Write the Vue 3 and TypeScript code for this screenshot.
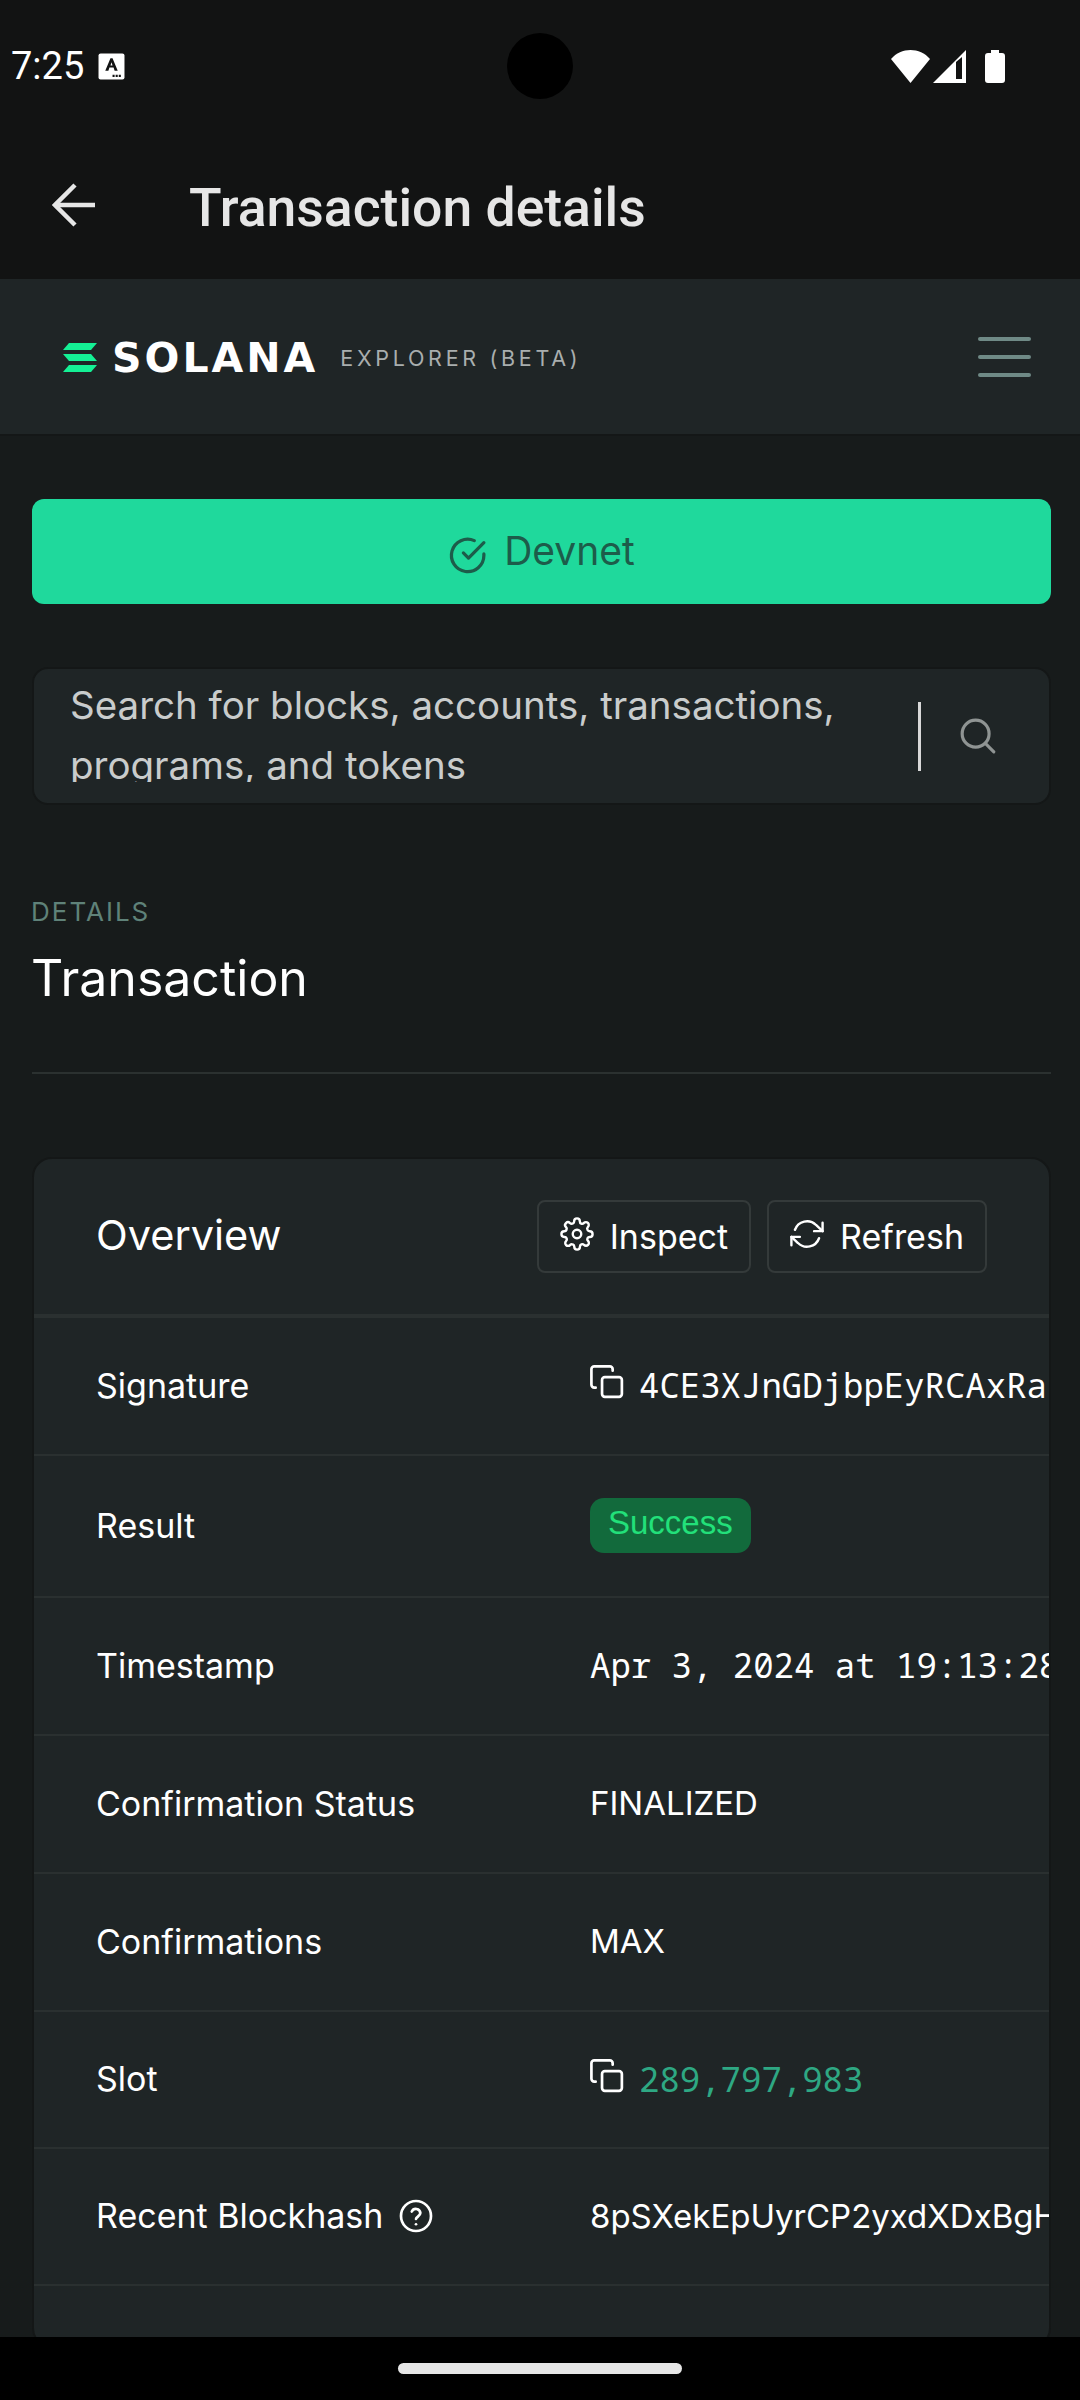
<template>
  <div class="screen">
    <div class="status">
      <span class="time">7:25</span>
      <svg class="a-icon" width="27" height="27" viewBox="0 0 26 26">
        <rect x="0.5" y="0.5" width="25" height="25" rx="2" fill="#fff" />
        <path d="M7 17 L12 5 h2 L19 17 h-3 l-1-3 h-4 l-1 3z M12 12 h2 l-1-3z" fill="#121313" fill-rule="evenodd" />
        <path d="M14 21h2v2h-2zM17 21h2v2h-2zM20 21h2v2h-2z" fill="#121313" />
      </svg>
      <div class="camera"></div>
      <div class="status-right">
        <svg width="39" height="33" viewBox="0 0 39 33"><path d="M0 9 C10 -3 29 -3 39 9 L19.5 33z" fill="#fff" /></svg>
        <svg class="signal" width="33" height="33" viewBox="0 0 33 33">
          <path d="M33 0 V33 H0z" fill="#fff" />
          <path d="M23 12 L29 7 V29 H23z" fill="#121313" />
        </svg>
        <svg class="battery" width="20" height="33" viewBox="0 0 20 33">
          <path d="M6 0 h8 v3 h3 a3 3 0 0 1 3 3 v24 a3 3 0 0 1 -3 3 h-14 a3 3 0 0 1 -3 -3 v-24 a3 3 0 0 1 3 -3 h3z" fill="#fff" />
        </svg>
      </div>
    </div>

    <div class="appbar">
      <svg class="back" width="44" height="44" viewBox="0 0 44 44" fill="none" stroke="#e6e6e6" stroke-width="4.5">
        <path d="M43 22 H4" />
        <path d="M23 2 L3 22 L23 42" />
      </svg>
      <span class="appbar-title">Transaction details</span>
    </div>

    <div class="web">
      <header class="nav">
        <svg class="logo-mark" width="34" height="29" viewBox="0 0 34 29">
          <path d="M6 0 H34 L28 7 H0z" fill="#14f195" />
          <path d="M0 11 H28 L34 18 H6z" fill="#14f195" />
          <path d="M6 22 H34 L28 29 H0z" fill="#14f195" />
        </svg>
        <span class="wordmark">SOLANA</span>
        <span class="beta">EXPLORER (BETA)</span>
        <div class="burger"><i></i><i></i><i></i></div>
      </header>

      <main class="main">
        <div class="cluster">
          <svg width="41" height="41" viewBox="0 0 24 24" fill="none" stroke="#1d5c4a" stroke-width="1.9" stroke-linecap="round" stroke-linejoin="round">
            <path d="M21 11.1V12a9.5 9.5 0 1 1-5.6-8.7" />
            <path d="M21 4.5 12 13.5l-3-3" />
          </svg>
          <span>Devnet</span>
        </div>

        <div class="search">
          <div class="search-text">Search for blocks, accounts, transactions, programs, and tokens</div>
          <div class="search-sep"></div>
          <svg class="search-icon" width="38" height="38" viewBox="0 0 24 24" fill="none" stroke="#8f9493" stroke-width="2" stroke-linecap="round">
            <circle cx="10.5" cy="10.5" r="8.5" />
            <path d="M22 22 16.8 16.8" />
          </svg>
        </div>

        <div class="page-head">
          <div class="pretitle">DETAILS</div>
          <h1>Transaction</h1>
        </div>

        <section class="card">
          <div class="card-head">
            <h2>Overview</h2>
            <button class="btn">
              <svg width="34" height="34" viewBox="0 0 24 24" fill="none" stroke="#fff" stroke-width="1.7" stroke-linecap="round" stroke-linejoin="round">
                <circle cx="12" cy="12" r="3" />
                <path d="M19.4 15a1.65 1.65 0 0 0 .33 1.82l.06.06a2 2 0 1 1-2.83 2.83l-.06-.06a1.65 1.65 0 0 0-2.82 1.17V21a2 2 0 1 1-4 0v-.09A1.65 1.65 0 0 0 9 19.4a1.65 1.65 0 0 0-1.82.33l-.06.06a2 2 0 1 1-2.83-2.83l.06-.06a1.65 1.65 0 0 0-1.17-2.82H3a2 2 0 1 1 0-4h.09A1.65 1.65 0 0 0 4.6 9a1.65 1.65 0 0 0-.33-1.82l-.06-.06a2 2 0 1 1 2.83-2.83l.06.06A1.65 1.65 0 0 0 9 4.6h.09A1.65 1.65 0 0 0 10 3.09V3a2 2 0 1 1 4 0v.09a1.65 1.65 0 0 0 2.82 1.17l.06-.06a2 2 0 1 1 2.83 2.83l-.06.06A1.65 1.65 0 0 0 19.4 9v.09a1.65 1.65 0 0 0 1.51 1H21a2 2 0 1 1 0 4h-.09a1.65 1.65 0 0 0-1.51 1z" />
              </svg>
              Inspect
            </button>
            <button class="btn">
              <svg width="34" height="34" viewBox="0 0 24 24" fill="none" stroke="#fff" stroke-width="1.7" stroke-linecap="round" stroke-linejoin="round">
                <path d="M23 4v6h-6" />
                <path d="M1 20v-6h6" />
                <path d="M3.51 9a9 9 0 0 1 14.85-3.36L23 10M1 14l4.64 4.36A9 9 0 0 0 20.49 15" />
              </svg>
              Refresh
            </button>
          </div>

          <div v-for="row in rows" :key="row.label" class="row" :style="{ height: row.height + 'px' }">
            <div class="row-label">
              {{ row.label }}
              <svg v-if="row.help" class="help" width="36" height="36" viewBox="0 0 24 24" fill="none" stroke="#fff" stroke-width="1.8" stroke-linecap="round">
                <circle cx="12" cy="12" r="10" />
                <path d="M9.2 9a3 3 0 0 1 5.7 1c0 2-2.9 2.6-2.9 4" />
                <path d="M12 17.5h.01" />
              </svg>
            </div>
            <div class="row-value" :class="row.kind">
              <svg v-if="row.copy" class="copy" width="34" height="34" viewBox="0 0 24 24" fill="none" stroke="#fff" stroke-width="1.9" stroke-linecap="round" stroke-linejoin="round">
                <rect x="8.5" y="8.5" width="14" height="14" rx="2" />
                <path d="M4 16H3a2 2 0 0 1-2-2V3a2 2 0 0 1 2-2h11a2 2 0 0 1 2 2v1" />
              </svg>
              <span v-if="row.kind === 'badge'" class="success">{{ row.value }}</span>
              <span v-else>{{ row.value }}</span>
            </div>
          </div>
          <div class="row row-empty"></div>
        </section>
      </main>
    </div>

    <div class="navbar"><div class="handle"></div></div>
  </div>
</template>

<script setup lang="ts">
interface Row {
  label: string
  value: string
  height: number
  kind?: string
  copy?: boolean
  help?: boolean
}

const rows: Row[] = [
  { label: 'Signature', value: '4CE3XJnGDjbpEyRCAxRa', height: 138, kind: 'mono', copy: true },
  { label: 'Result', value: 'Success', height: 142, kind: 'badge' },
  { label: 'Timestamp', value: 'Apr 3, 2024 at 19:13:28', height: 138, kind: 'mono' },
  { label: 'Confirmation Status', value: 'FINALIZED', height: 138 },
  { label: 'Confirmations', value: 'MAX', height: 138 },
  { label: 'Slot', value: '289,797,983', height: 137, kind: 'mono link', copy: true },
  { label: 'Recent Blockhash', value: '8pSXekEpUyrCP2yxdXDxBgH', height: 137, help: true },
]
</script>

<style>
html,
body {
  margin: 0;
  background: #000;
}
</style>

<style scoped>
.screen {
  position: relative;
  width: 1080px;
  height: 2400px;
  display: flex;
  flex-direction: column;
  overflow: hidden;
  background: #171b1b;
  font-family: Inter, "Noto Sans", sans-serif;
  color: #fff;
}

.status {
  height: 130px;
  flex: none;
  display: flex;
  align-items: center;
  padding: 2px 75px 0 11px;
  box-sizing: border-box;
  background: #121313;
  font-family: Roboto, sans-serif;
}

.time {
  font-size: 38px;
  color: #fff;
}

.a-icon {
  margin-left: 14px;
}

.camera {
  position: absolute;
  left: 507px;
  top: 33px;
  width: 66px;
  height: 66px;
  border-radius: 50%;
  background: #000;
}

.status-right {
  margin-left: auto;
  display: flex;
  align-items: center;
}

.signal {
  margin-left: 3px;
}

.battery {
  margin-left: 19px;
}

.appbar {
  height: 149px;
  flex: none;
  display: flex;
  align-items: center;
  background: #121313;
}

.back {
  margin-left: 52px;
}

.appbar-title {
  margin-left: 93px;
  margin-top: 5px;
  font-family: Roboto, sans-serif;
  font-weight: 500;
  font-size: 53.5px;
  color: #e6e6e6;
}

.web {
  flex: 1;
  min-height: 0;
  overflow: hidden;
}

.nav {
  height: 157px;
  box-sizing: border-box;
  display: flex;
  align-items: center;
  padding: 0 20px 0 63px;
  background: #1f2526;
  border-bottom: 2px solid #141717;
}

.logo-mark {
  margin-top: 2px;
}

.wordmark {
  margin-left: 15px;
  margin-top: 3px;
  font-family: "DejaVu Sans", sans-serif;
  font-weight: 700;
  font-size: 41px;
  line-height: 1;
  letter-spacing: 3px;
  color: #fff;
}

.beta {
  margin-left: 22px;
  margin-top: 2px;
  font-size: 21.5px;
  letter-spacing: 3.7px;
  color: #a9aeae;
}

.burger {
  margin-left: auto;
  width: 53px;
  display: flex;
  flex-direction: column;
  gap: 14px;
  margin-right: 29px;
}

.burger i {
  display: block;
  height: 4px;
  border-radius: 2px;
  background: #6f8a86;
}

.main {
  padding: 63px 29px 0 32px;
}

.cluster {
  height: 105px;
  display: flex;
  align-items: center;
  justify-content: center;
  gap: 15px;
  border-radius: 12px;
  background: #1fd99c;
  color: #1d5c4a;
  font-size: 39px;
}

.cluster svg {
  margin-top: 7px;
}

.cluster span {
  margin-top: -2px;
}

.search {
  margin-top: 63px;
  height: 138px;
  box-sizing: border-box;
  display: flex;
  align-items: center;
  padding: 0 52px 0 36px;
  border: 2px solid #141717;
  border-radius: 16px;
  background: #1f2526;
}

.search-text {
  width: 844px;
  height: 107px;
  align-self: flex-start;
  margin-top: 6px;
  overflow: hidden;
  font-size: 38.5px;
  line-height: 60px;
  color: #c9cccc;
}

.search-sep {
  margin-left: 4px;
  width: 3px;
  height: 69px;
  background: #d8d8d8;
}

.search-icon {
  margin-left: auto;
}

.page-head {
  margin-top: 91px;
  padding-bottom: 60px;
  border-bottom: 2px solid #2b3130;
}

.pretitle {
  margin-left: -1px;
  font-size: 26px;
  line-height: 32px;
  letter-spacing: 2px;
  color: #5f8279;
}

h1 {
  margin: 16px 0 0 -1px;
  font-size: 50px;
  font-weight: 400;
  line-height: 68px;
  color: #fff;
}

.card {
  margin-top: 83px;
  border: 2px solid #141717;
  border-radius: 20px;
  background: #1f2526;
  overflow: hidden;
}

.card-head {
  height: 159px;
  box-sizing: border-box;
  display: flex;
  align-items: center;
  padding: 0 62px 0 62px;
  border-bottom: 4px solid #2a3030;
}

h2 {
  margin: -3px auto 0 0;
  font-size: 41.5px;
  font-weight: 400;
}

.btn {
  height: 73px;
  display: flex;
  align-items: center;
  gap: 16px;
  margin-left: 16px;
  padding: 0 21px;
  box-sizing: border-box;
  border: 2px solid #343a3a;
  border-radius: 8px;
  background: transparent;
  color: #fff;
  font-family: inherit;
  font-size: 34px;
}

.btn svg {
  margin-top: -6px;
}

.row {
  box-sizing: border-box;
  display: flex;
  align-items: center;
  padding-left: 62px;
  border-bottom: 2px solid #2a3030;
  font-size: 34px;
}

.row-empty {
  height: 60px;
  border-bottom: none;
}

.row-label {
  width: 494px;
  flex: none;
  display: flex;
  align-items: center;
  gap: 15px;
  margin-top: -2px;
}

.row-value {
  display: flex;
  align-items: center;
  gap: 15px;
  margin-top: -2px;
  white-space: nowrap;
  font-size: 33px;
}

.mono {
  font-family: "Noto Sans Mono", "DejaVu Sans Mono", monospace;
  font-size: 34px;
}

.link {
  color: #2ea883;
}

.copy {
  flex: none;
  margin-top: -6px;
}

.success {
  display: block;
  padding: 0 18px;
  height: 55px;
  line-height: 50px;
  border-radius: 14px;
  background: #126a3c;
  color: #22e07a;
  font-family: "Liberation Sans", sans-serif;
  font-size: 33px;
}

.navbar {
  height: 63px;
  flex: none;
  background: #000;
  display: flex;
  justify-content: center;
}

.handle {
  margin-top: 26px;
  width: 284px;
  height: 11px;
  border-radius: 6px;
  background: #e6e6e6;
}
</style>
